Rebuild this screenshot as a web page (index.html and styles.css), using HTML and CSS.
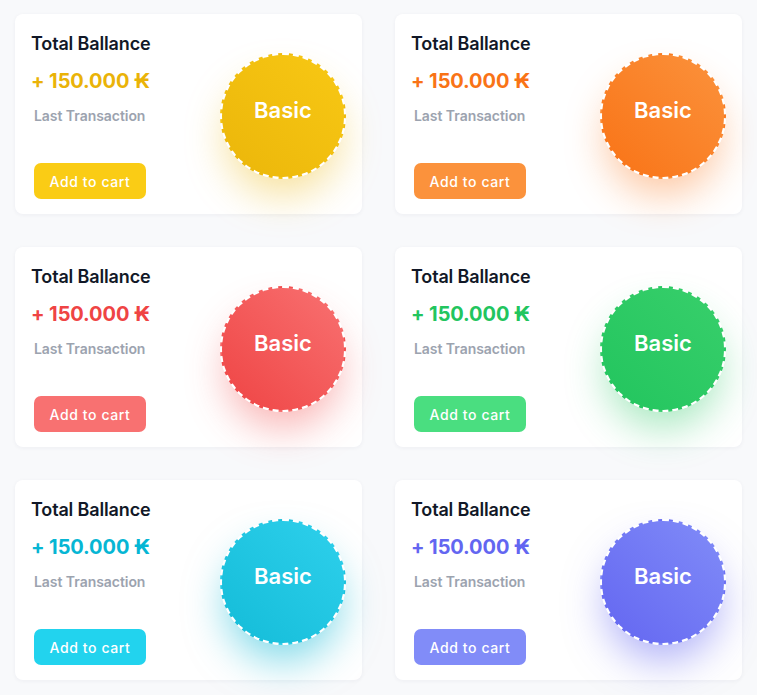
FILE: index.html
```html
<!DOCTYPE html>
<html lang="en">
<head>
<meta charset="utf-8">
<title>Cards</title>
<link rel="stylesheet" href="styles.css">
</head>
<body>
<main class="grid">
  <section class="card yellow">
    <div class="info">
      <h2 class="title">Total Ballance</h2>
      <p class="amount">+ 150.000 ₭</p>
      <p class="label">Last Transaction</p>
      <button class="btn">Add to cart</button>
    </div>
    <div class="badge"><span class="badge-text">Basic</span></div>
  </section>
  <section class="card orange">
    <div class="info">
      <h2 class="title">Total Ballance</h2>
      <p class="amount">+ 150.000 ₭</p>
      <p class="label">Last Transaction</p>
      <button class="btn">Add to cart</button>
    </div>
    <div class="badge"><span class="badge-text">Basic</span></div>
  </section>
  <section class="card red">
    <div class="info">
      <h2 class="title">Total Ballance</h2>
      <p class="amount">+ 150.000 ₭</p>
      <p class="label">Last Transaction</p>
      <button class="btn">Add to cart</button>
    </div>
    <div class="badge"><span class="badge-text">Basic</span></div>
  </section>
  <section class="card green">
    <div class="info">
      <h2 class="title">Total Ballance</h2>
      <p class="amount">+ 150.000 ₭</p>
      <p class="label">Last Transaction</p>
      <button class="btn">Add to cart</button>
    </div>
    <div class="badge"><span class="badge-text">Basic</span></div>
  </section>
  <section class="card cyan">
    <div class="info">
      <h2 class="title">Total Ballance</h2>
      <p class="amount">+ 150.000 ₭</p>
      <p class="label">Last Transaction</p>
      <button class="btn">Add to cart</button>
    </div>
    <div class="badge"><span class="badge-text">Basic</span></div>
  </section>
  <section class="card indigo">
    <div class="info">
      <h2 class="title">Total Ballance</h2>
      <p class="amount">+ 150.000 ₭</p>
      <p class="label">Last Transaction</p>
      <button class="btn">Add to cart</button>
    </div>
    <div class="badge"><span class="badge-text">Basic</span></div>
  </section>
</main>
</body>
</html>
```
FILE: styles.css
```css
* { box-sizing: border-box; }
html, body { margin: 0; padding: 0; }
body {
  background: #f8f9fb;
  font-family: Inter, "Noto Sans", "DejaVu Sans", sans-serif;
  width: 757px;
  height: 695px;
  overflow: hidden;
}
.grid {
  display: grid;
  grid-template-columns: 347px 347px;
  grid-auto-rows: 200px;
  column-gap: 33px;
  row-gap: 33px;
  padding: 14px 0 0 15px;
}
.card {
  background: #ffffff;
  border-radius: 8px;
  box-shadow: 0 1px 4px rgba(30, 41, 80, 0.05);
  display: flex;
  justify-content: space-between;
  align-items: center;
  padding: 16px 16px 15px 16px;
}
.info {
  display: flex;
  flex-direction: column;
  align-items: flex-start;
  height: 100%;
}
.title {
  margin: 0;
  font-size: 18px;
  line-height: 28px;
  font-weight: 600;
  letter-spacing: -0.15px;
  color: #111827;
}
.amount {
  margin: 9px 0 0 0;
  font-size: 20px;
  line-height: 28px;
  font-weight: 700;
  letter-spacing: -0.1px;
}
.label {
  margin: 11px 0 0 3px;
  font-size: 14px;
  line-height: 20px;
  font-weight: 600;
  letter-spacing: -0.05px;
  color: #9ca3af;
}
.btn {
  margin: auto 0 0 3px;
  width: 112px;
  height: 36px;
  border: 0;
  border-radius: 7px;
  color: #ffffff;
  font-family: inherit;
  font-size: 14px;
  font-weight: 500;
  letter-spacing: 0.6px;
  padding: 0;
}
.badge {
  width: 126px;
  height: 126px;
  border-radius: 50%;
  border: 2px dashed #ffffff;
  display: flex;
  align-items: center;
  justify-content: center;
  color: #ffffff;
  font-size: 22px;
  font-weight: 600;
  margin-top: 2px;
}
.badge-text {
  margin-bottom: 11px;
}
.yellow .amount { color: #eab308; }
.yellow .btn { background: #facc15; }
.yellow .badge { background: linear-gradient(to bottom left, #f8c814, #ebb60a); box-shadow: 0 22px 40px -6px rgba(234, 179, 8, 0.4); }
.orange .amount { color: #f97316; }
.orange .btn { background: #fb923c; }
.orange .badge { background: linear-gradient(to bottom left, #fb923c, #f97316); box-shadow: 0 22px 40px -6px rgba(249, 115, 22, 0.4); }
.red .amount { color: #ef4444; }
.red .btn { background: #f87171; }
.red .badge { background: linear-gradient(to bottom left, #f87171, #ef4444); box-shadow: 0 22px 40px -6px rgba(239, 68, 68, 0.4); }
.green .amount { color: #22c55e; }
.green .btn { background: #4ade80; }
.green .badge { background: linear-gradient(to bottom left, #38cf6b, #22c55e); box-shadow: 0 22px 40px -6px rgba(34, 197, 94, 0.4); }
.cyan .amount { color: #06b6d4; }
.cyan .btn { background: #22d3ee; }
.cyan .badge { background: linear-gradient(to bottom left, #2ed0ec, #14bcd8); box-shadow: 0 22px 40px -6px rgba(6, 182, 212, 0.5); }
.indigo .amount { color: #6366f1; }
.indigo .btn { background: #818cf8; }
.indigo .badge { background: linear-gradient(to bottom left, #818cf8, #6366f1); box-shadow: 0 22px 40px -6px rgba(99, 102, 241, 0.5); }
```
